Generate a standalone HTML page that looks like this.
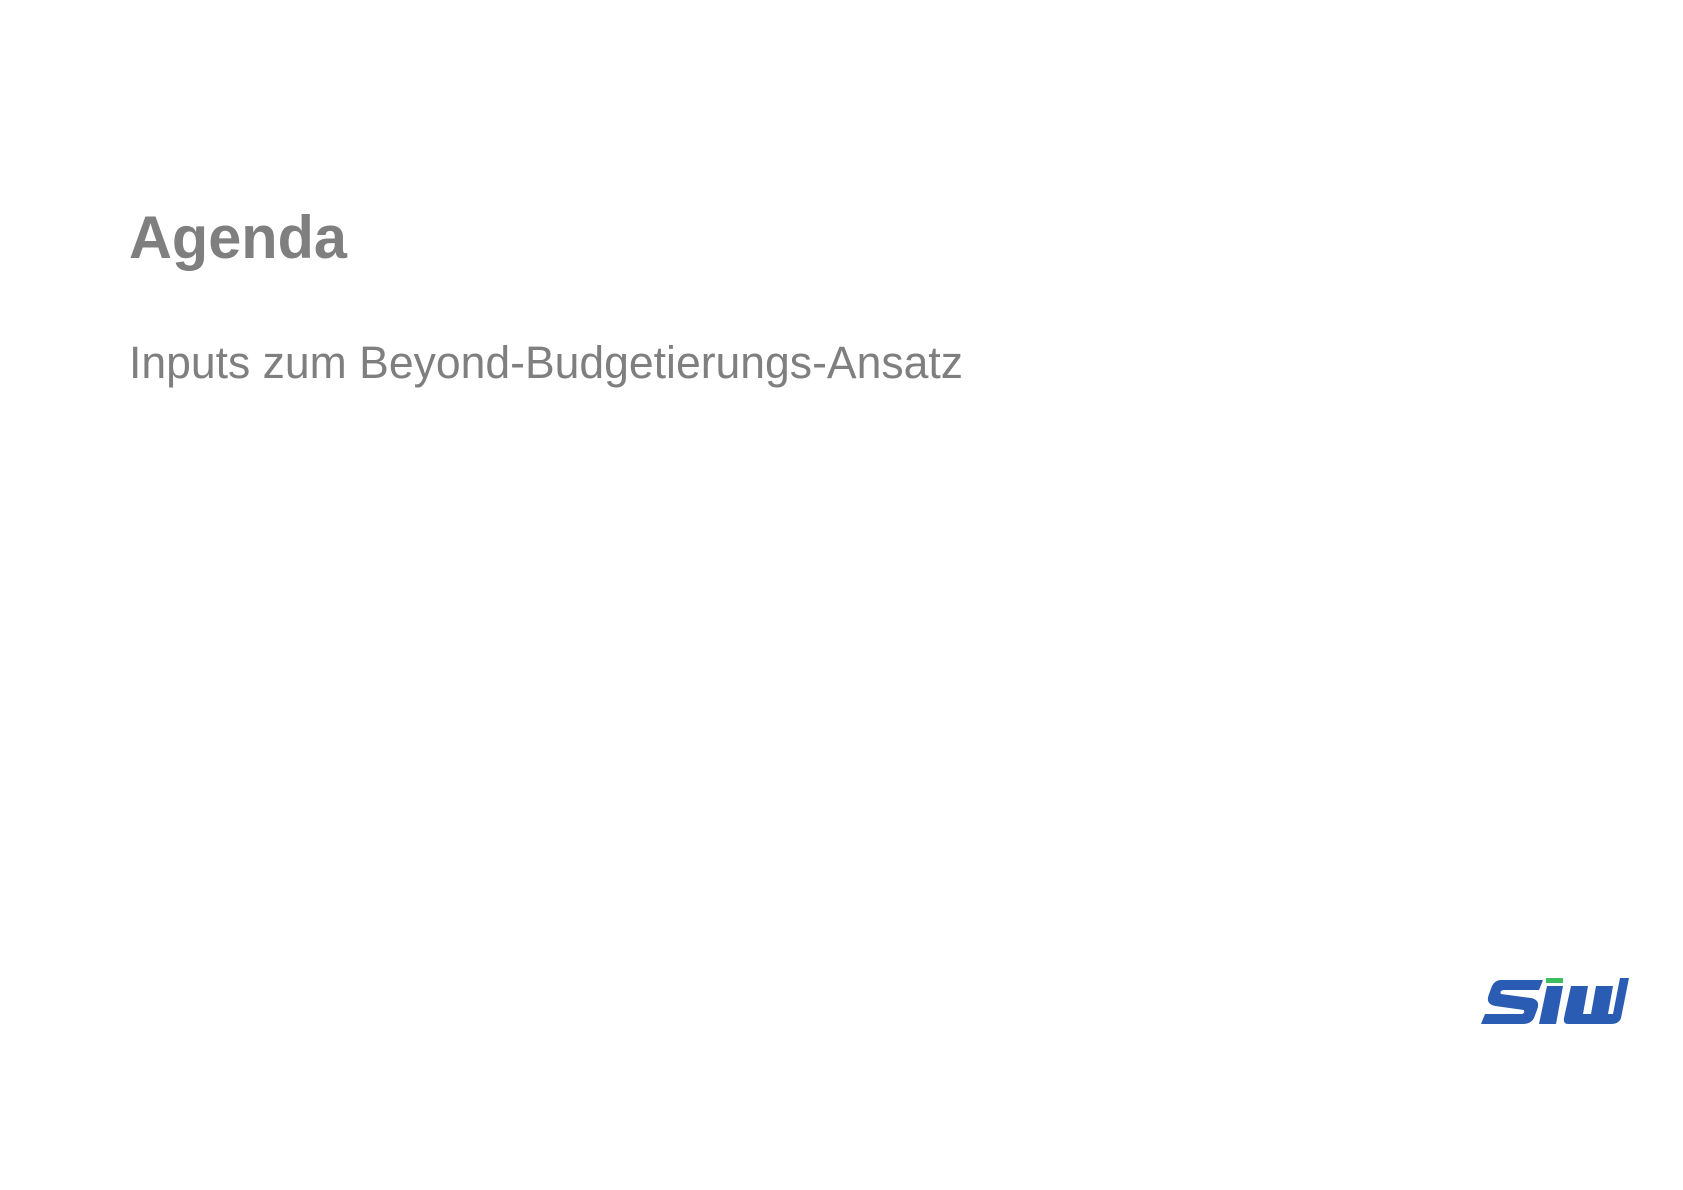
<!DOCTYPE html>
<html><head><meta charset="utf-8"><style>
html,body{margin:0;padding:0;background:#fff;width:1683px;height:1190px;overflow:hidden}
svg{position:absolute;left:0;top:0}
</style></head><body>
<svg width="1683" height="1190" viewBox="0 0 1683 1190">
<text x="129" y="258" font-family="Liberation Sans, sans-serif" font-weight="bold" font-size="60" fill="#7f7f7f" textLength="218" lengthAdjust="spacingAndGlyphs">Agenda</text>
<text x="129" y="378" font-family="Liberation Sans, sans-serif" font-size="45" fill="#7f7f7f" textLength="834" lengthAdjust="spacingAndGlyphs">Inputs zum Beyond-Budgetierungs-Ansatz</text>
<g transform="translate(1481,978)" fill="#2a5cb3">
<path d="M20,2 L62,2 L58,12 L24,12 Q18,12 20,16 L50,20 Q60,22 56,32 L53,40 Q50,46 42,46 L0,46 L4,36 L40,36 Q44,36 43,32 L14,28 Q4,26 8,16 L11,8 Q14,2 20,2 Z"/>
<path d="M66,8 L82,8 L75,46 L58,46 Z"/>
<rect x="65" y="0" width="17" height="5" fill="#3dbf5f"/>
<path d="M90,8 L107,8 L102,36 L110,36 L115,8 L132,8 L127,36 L132,36 L139,0 L148,0 L140,40 Q138,46 130,46 L87,46 Q82,46 83,40 Z"/>
</g>
</svg>
</body></html>
